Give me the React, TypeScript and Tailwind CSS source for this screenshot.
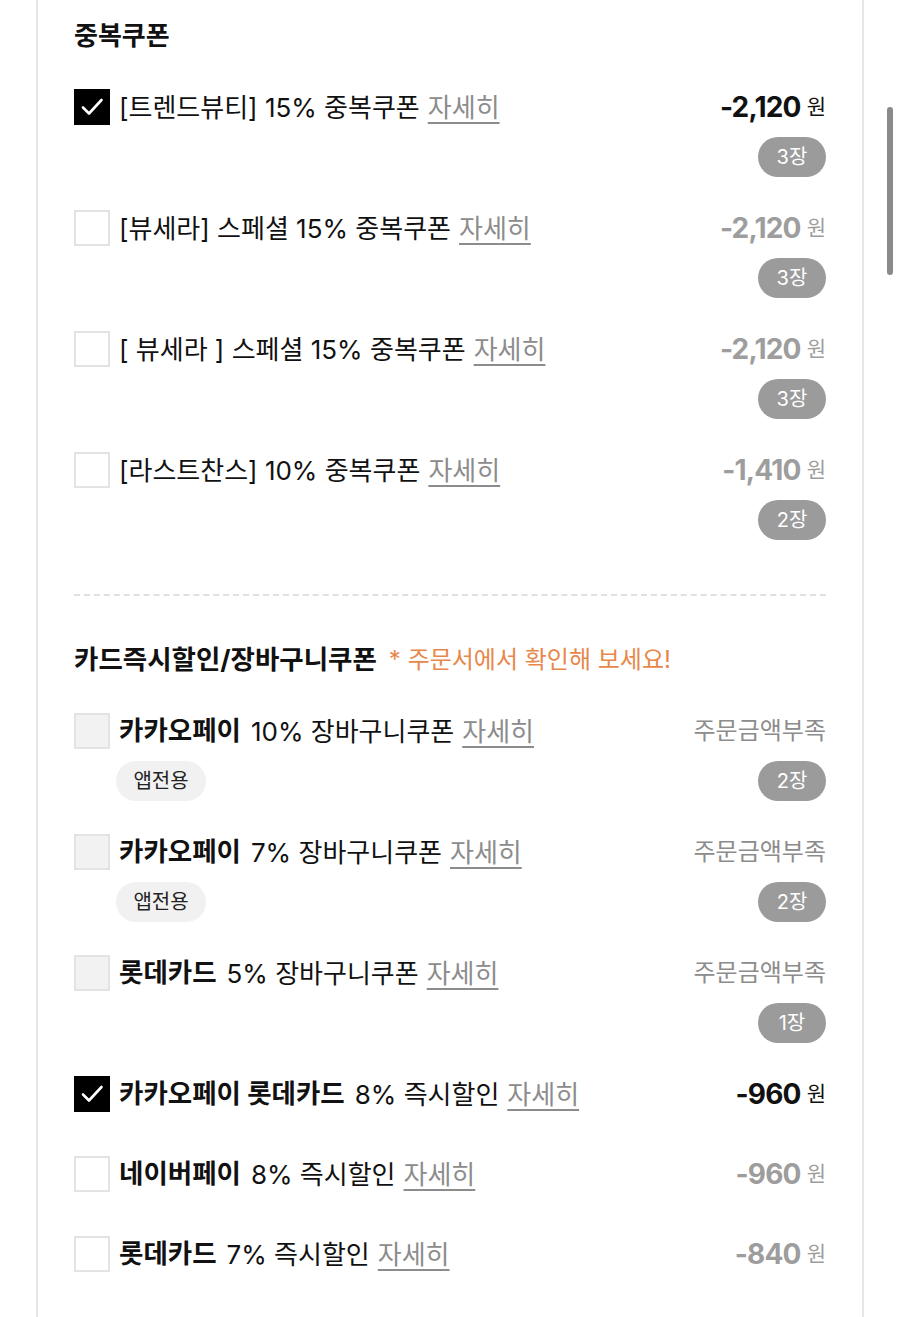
import React from 'react';

type Item = {
  bold?: string;
  text: string;
  checked?: boolean;
  disabled?: boolean;
  amount?: string;
  status?: string;
  count?: string;
  appOnly?: boolean;
};

const stacked: Item[] = [
  { text: '[트렌드뷰티] 15% 중복쿠폰', checked: true, amount: '-2,120', count: '3장' },
  { text: '[뷰세라] 스페셜 15% 중복쿠폰', amount: '-2,120', count: '3장' },
  { text: '[ 뷰세라 ] 스페셜 15% 중복쿠폰', amount: '-2,120', count: '3장' },
  { text: '[라스트찬스] 10% 중복쿠폰', amount: '-1,410', count: '2장' },
];

const cards: Item[] = [
  { bold: '카카오페이', text: '10% 장바구니쿠폰', disabled: true, status: '주문금액부족', count: '2장', appOnly: true },
  { bold: '카카오페이', text: '7% 장바구니쿠폰', disabled: true, status: '주문금액부족', count: '2장', appOnly: true },
  { bold: '롯데카드', text: '5% 장바구니쿠폰', disabled: true, status: '주문금액부족', count: '1장' },
  { bold: '카카오페이 롯데카드', text: '8% 즉시할인', checked: true, amount: '-960' },
  { bold: '네이버페이', text: '8% 즉시할인', amount: '-960' },
  { bold: '롯데카드', text: '7% 즉시할인', amount: '-840' },
];

function Checkbox({ checked, disabled }: { checked?: boolean; disabled?: boolean }) {
  if (checked) {
    return (
      <div className="w-[36px] h-[36px] shrink-0 bg-black flex items-center justify-center">
        <svg width="28" height="28" viewBox="0 0 28 28" fill="none">
          <path d="M5 14.5l6 6L23.5 7" stroke="#fff" strokeWidth="2.6" strokeLinecap="round" strokeLinejoin="round" />
        </svg>
      </div>
    );
  }
  return (
    <div
      className={
        disabled
          ? 'w-[36px] h-[36px] shrink-0 border-2 border-[#e3e3e3] bg-[#f2f2f2]'
          : 'w-[36px] h-[36px] shrink-0 border-2 border-[#e3e3e3] bg-white'
      }
    />
  );
}

function Row({ item, last }: { item: Item; last?: boolean }) {
  const hasSecond = !!item.count;
  const mb = last ? 'mb-0' : hasSecond ? 'mb-[33px]' : 'mb-[44px]';
  return (
    <div className={`flex items-start ${mb}`}>
      <Checkbox checked={item.checked} disabled={item.disabled} />
      <div className="flex-1 ml-[9px] min-w-0">
        <div className="h-[36px] flex items-center text-[26px] text-[#111] whitespace-nowrap">
          {item.bold && <span className="font-bold mr-[10px] text-[26.5px]">{item.bold}</span>}
          <span>{item.text}</span>
          <span className="ml-[8px] text-[#8c8c8c] underline underline-offset-[5px] decoration-[1.5px]">자세히</span>
        </div>
        {item.appOnly && (
          <div className="mt-[12px] ml-[-3px] w-[90px] h-[40px] rounded-full bg-[#f1f1f1] flex items-center justify-center text-[20px] text-[#222]">
            앱전용
          </div>
        )}
      </div>
      <div className="flex flex-col items-end shrink-0">
        <div className="h-[36px] flex items-center whitespace-nowrap">
          {item.amount ? (
            <>
              <span
                className={
                  item.checked
                    ? 'text-[28px] font-bold tracking-[-0.8px] text-[#111]'
                    : 'text-[28px] font-bold tracking-[-0.8px] text-[#9d9d9d]'
                }
              >
                {item.amount}
              </span>
              <span className={item.checked ? 'ml-[6px] text-[21px] text-[#111]' : 'ml-[6px] text-[21px] text-[#9d9d9d]'}>원</span>
            </>
          ) : (
            <span className="text-[24px] text-[#8c8c8c]">{item.status}</span>
          )}
        </div>
        {item.count && (
          <div className="mt-[12px] w-[68px] h-[40px] rounded-full bg-[#9b9b9b] flex items-center justify-center text-[20px] text-white">
            {item.count}
          </div>
        )}
      </div>
    </div>
  );
}

export default function App() {
  return (
    <div
      className="relative w-[900px] h-[1317px] overflow-hidden bg-white"
      style={{ fontFamily: 'Inter, "Noto Sans CJK KR", sans-serif' }}
    >
      <div className="ml-[36px] w-[828px] h-full border-x-2 border-[#e6e6e6] bg-white pt-[19px] px-[36px]">
        <div className="h-[32px] flex items-center text-[26px] font-bold text-[#111] mb-[38px]">중복쿠폰</div>
        {stacked.map((it, i) => (
          <Row key={i} item={it} last={i === stacked.length - 1} />
        ))}
        <div className="mt-[54px] border-t-2 border-dashed border-[#e0e0e0]" />
        <div className="mt-[48px] h-[32px] flex items-center whitespace-nowrap mb-[37px]">
          <span className="text-[26.5px] font-bold text-[#111]">카드즉시할인/장바구니쿠폰</span>
          <span className="ml-[12px] text-[24px] text-[#e8874a]">* 주문서에서 확인해 보세요!</span>
        </div>
        {cards.map((it, i) => (
          <Row key={i} item={it} />
        ))}
      </div>
      <div className="absolute left-[887px] top-[107px] w-[6px] h-[168px] rounded-full bg-[#8a8a8a]" />
    </div>
  );
}
